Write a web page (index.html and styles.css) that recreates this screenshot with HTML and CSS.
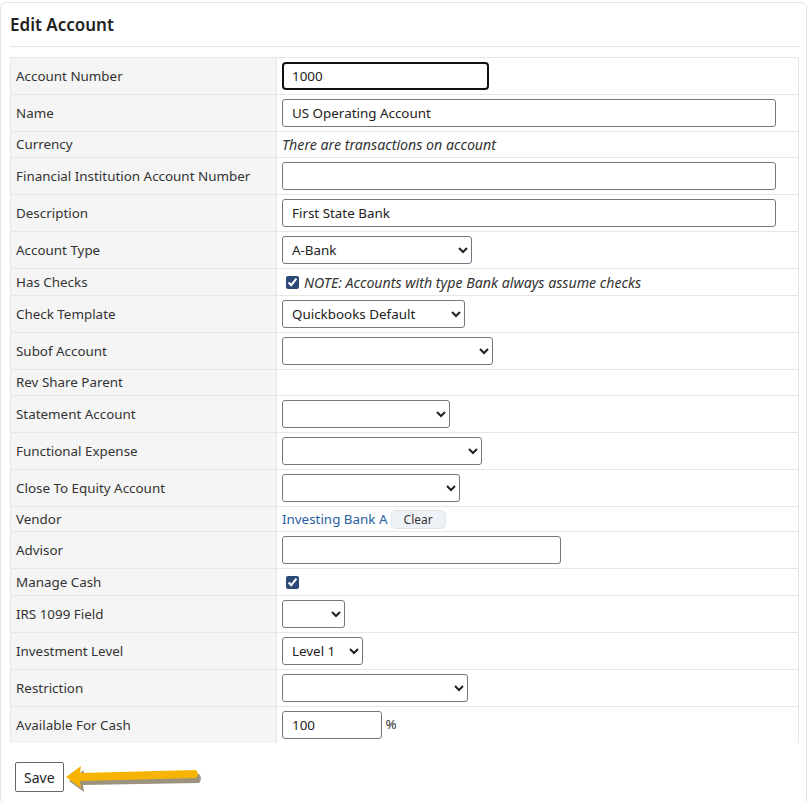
FILE: index.html
```html
<!DOCTYPE html>
<html lang="en">
<head>
  <meta charset="UTF-8" />
  <title>Edit Account</title>
  <link rel="stylesheet" href="styles.css">
</head>
<body>
  <div class="card">
    <div class="card-header">
      <h2>Edit Account</h2>
    </div>

    <form class="account-form">
      <table class="fields">
        <tr>
          <th>Account Number</th>
          <td><input type="text" class="focused w-num" value="1000"></td>
        </tr>
        <tr>
          <th>Name</th>
          <td><input type="text" class="w-wide" value="US Operating Account"></td>
        </tr>
        <tr class="plain">
          <th>Currency</th>
          <td><em>There are transactions on account</em></td>
        </tr>
        <tr>
          <th>Financial Institution Account Number</th>
          <td><input type="text" class="w-wide" value=""></td>
        </tr>
        <tr>
          <th>Description</th>
          <td><input type="text" class="w-wide" value="First State Bank"></td>
        </tr>
        <tr>
          <th>Account Type</th>
          <td><select class="w-type"><option>A-Bank</option></select></td>
        </tr>
        <tr class="plain">
          <th>Has Checks</th>
          <td><label class="check"><input type="checkbox" checked> <em>NOTE: Accounts with type Bank always assume checks</em></label></td>
        </tr>
        <tr>
          <th>Check Template</th>
          <td><select class="w-template"><option>Quickbooks Default</option></select></td>
        </tr>
        <tr>
          <th>Subof Account</th>
          <td><select class="w-subof"><option></option></select></td>
        </tr>
        <tr class="plain">
          <th>Rev Share Parent</th>
          <td></td>
        </tr>
        <tr>
          <th>Statement Account</th>
          <td><select class="w-statement"><option></option></select></td>
        </tr>
        <tr>
          <th>Functional Expense</th>
          <td><select class="w-functional"><option></option></select></td>
        </tr>
        <tr>
          <th>Close To Equity Account</th>
          <td><select class="w-equity"><option></option></select></td>
        </tr>
        <tr class="plain vendor-row">
          <th>Vendor</th>
          <td><div class="vendor-cell"><a href="#" class="vendor">Investing Bank A</a><button type="button" class="clear">Clear</button></div></td>
        </tr>
        <tr>
          <th>Advisor</th>
          <td><input type="text" class="w-advisor" value=""></td>
        </tr>
        <tr class="plain">
          <th>Manage Cash</th>
          <td><label class="check"><input type="checkbox" checked></label></td>
        </tr>
        <tr>
          <th>IRS 1099 Field</th>
          <td><select class="w-irs"><option></option></select></td>
        </tr>
        <tr>
          <th>Investment Level</th>
          <td><select class="w-level"><option>Level 1</option></select></td>
        </tr>
        <tr>
          <th>Restriction</th>
          <td><select class="w-restriction"><option></option></select></td>
        </tr>
        <tr class="last">
          <th>Available For Cash</th>
          <td><input type="text" class="w-cash" value="100"> %</td>
        </tr>
      </table>

      <div class="actions">
        <button type="submit" class="save">Save</button>
        <!-- pointer towards the save button -->
        <svg class="pointer" width="140" height="34" viewBox="0 0 140 34">
          <path d="M4 17 L19 6 L18 13 L134 10 Q138 14 134 19 L18 21 L19 28 Z" fill="#4a3a10" opacity="0.55" transform="translate(2 3)"/>
          <path d="M3 16 L18 5 L17 12 L133 9 Q137 13 133 17 L17 20 L18 27 Z" fill="#f6b400"/>
        </svg>
      </div>
    </form>
  </div>
</body>
</html>
```

FILE: styles.css
```css
body {
  margin: 0;
  font-family: "Noto Sans", "Open Sans", sans-serif;
  font-size: 13.4px;
  color: #333;
  background: #fff;
}
.card {
  margin: 2px 1px 1px 0;
  border: 1px solid #dfe4ea;
  border-radius: 6px;
  padding: 0 7px 8px 9px;
}
.card-header {
  border-bottom: 1px solid #dfe4ea;
  padding: 10px 0 9px 0;
}
.card-header h2 {
  margin: 0;
  font-size: 17px;
  line-height: 24px;
  font-weight: 600;
  color: #222;
}
.fields {
  margin-top: 10px;
  width: 100%;
  border-collapse: collapse;
  border: 1px solid #e6e6e6;
  border-bottom: none;
}
.fields tr {
  border-bottom: 1px solid #e6e6e6;
}
.fields tr.last {
  border-bottom: none;
}
.fields th {
  width: 255px;
  background: #f5f5f5;
  border-right: 1px solid #e6e6e6;
  text-align: left;
  font-weight: 400;
  padding: 4px 5px;
  line-height: 17px;
  height: 28px;
}
.fields tr.plain th {
  height: 17px;
}
.fields td {
  padding: 4px 5px;
  line-height: 17px;
}
.fields em {
  color: #333;
  font-size: 14.2px;
  vertical-align: top;
}
input[type="text"] {
  box-sizing: border-box;
  height: 28px;
  border: 1px solid #767682;
  border-radius: 3px;
  padding: 2px 9px;
  font-family: inherit;
  font-size: 13.4px;
  color: #222;
  vertical-align: middle;
}
input.focused {
  border: 2px solid #111;
  border-radius: 4px;
  padding-left: 8px;
}
select {
  box-sizing: border-box;
  height: 28px;
  border: 1px solid #767682;
  border-radius: 3px;
  background: #fff;
  padding: 2px 5px;
  font-family: inherit;
  font-size: 13.4px;
  color: #222;
  vertical-align: middle;
}
.w-num { width: 207px; }
.w-wide { width: 494px; }
.w-advisor { width: 279px; }
.w-cash { width: 100px; }
.w-type { width: 190px; }
.w-template { width: 183px; }
.w-subof { width: 211px; }
.w-statement { width: 168px; }
.w-functional { width: 200px; }
.w-equity { width: 178px; }
.w-irs { width: 63px; }
.w-level { width: 81px; }
.w-restriction { width: 186px; }
.check {
  display: flex;
  align-items: center;
  gap: 5px;
  height: 18px;
}
.check input {
  accent-color: #2c4a78;
  width: 13px;
  height: 13px;
  margin: 0 0 0 4px;
}
.vendor-row th,
.vendor-row td {
  padding-bottom: 3px;
}
.vendor-cell {
  display: flex;
  align-items: center;
  gap: 3px;
  height: 17px;
}
.vendor {
  color: #1f5fa6;
  text-decoration: none;
}
.clear {
  font-family: inherit;
  font-size: 12px;
  color: #333;
  background: #eef2f7;
  border: 1px solid #e0e5ec;
  border-radius: 5px;
  padding: 0 12px;
  height: 19px;
  line-height: 16px;
}
.actions {
  display: flex;
  align-items: center;
  margin-top: 16px;
  padding-left: 5px;
}
.save {
  font-family: inherit;
  font-size: 14px;
  color: #222;
  background: #fff;
  border: 1px solid #666;
  border-radius: 2px;
  padding: 0 8px;
  height: 30px;
}
.pointer {
  margin-top: 2px;
  margin-left: -1px;
}
```
